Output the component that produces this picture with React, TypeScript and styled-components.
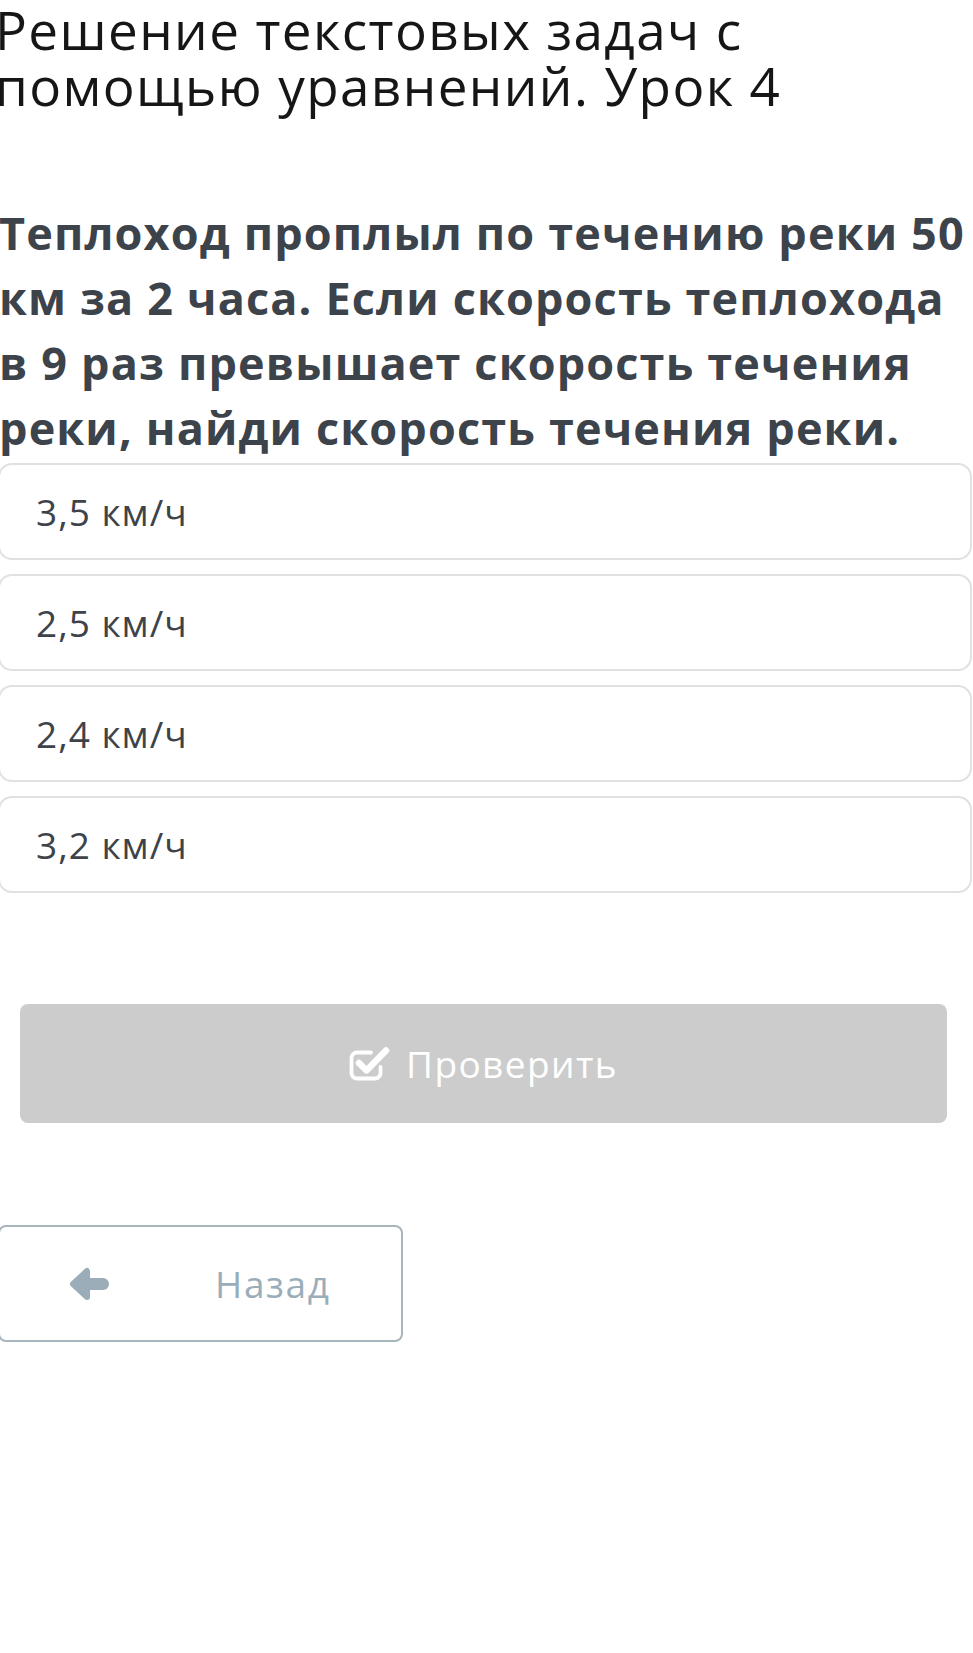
import styled, { createGlobalStyle } from 'styled-components'

const GlobalStyle = createGlobalStyle`
    html, body {
        margin: 0;
        padding: 0;
        background: #ffffff;
    }
    body {
        font-family: "Open Sans", "Noto Sans", "Liberation Sans", sans-serif;
        overflow: hidden;
    }
`

const Page = styled.div`
    width: 973px;
    min-height: 1653px;
    display: flex;
    flex-direction: column;
    padding-top: 2px;
    box-sizing: border-box;
`

const Title = styled.h1`
    margin: 0 0 0 -5px;
    font-size: 53px;
    line-height: 56px;
    font-weight: 400;
    letter-spacing: 1.4px;
    color: #161616;
`

const Question = styled.div`
    margin: 86px 0 0 -1px;
    width: 974px;
    font-size: 45px;
    line-height: 65px;
    font-weight: 700;
    letter-spacing: 1.15px;
    color: #3d434b;
`

const Options = styled.div`
    margin: 3px 0 0 -2px;
    width: 974px;
    display: flex;
    flex-direction: column;
    gap: 14px;
`

const Option = styled.div`
    height: 97px;
    box-sizing: border-box;
    border: 2px solid #e1e1e1;
    border-radius: 14px;
    display: flex;
    align-items: center;
    padding-left: 36px;
    font-size: 37px;
    letter-spacing: 1px;
    color: #3e434a;
    background: #fff;
`

const CheckButton = styled.div`
    margin: 111px 0 0 20px;
    width: 927px;
    height: 119px;
    border-radius: 8px;
    background: #cccccc;
    display: flex;
    align-items: center;
    justify-content: center;
    gap: 15px;
    color: #ffffff;
    font-size: 37px;
    letter-spacing: 1.4px;
`

const BackButton = styled.div<{ $color: string }>`
    margin: 102px 0 0 -2px;
    width: 405px;
    height: 117px;
    box-sizing: border-box;
    border: 2px solid #a9b5bd;
    border-radius: 8px;
    display: flex;
    align-items: center;
    padding-left: 68px;
    color: ${({ $color }) => $color};
    font-size: 37px;
    letter-spacing: 1.6px;
`

const BackLabel = styled.span`
    margin-left: 105px;
`

const CheckIcon = () => (
    <svg width="42" height="34" viewBox="0 0 42 34" fill="none">
        <path d="M22 5.5 H8 a5.5 5.5 0 0 0 -5.5 5.5 V26 a5.5 5.5 0 0 0 5.5 5.5 H26 a5.5 5.5 0 0 0 5.5 -5.5 V20"
            stroke="#fff" strokeWidth="3.8" strokeLinecap="round" />
        <path d="M10 16 L17.5 23.5 L37 3.5" stroke="#fff" strokeWidth="6.5" strokeLinecap="round" strokeLinejoin="round" />
    </svg>
)

const ArrowIcon = ({ color }: { color: string }) => (
    <svg width="42" height="34" viewBox="0 0 42 34">
        <path d="M5 17 L19 4 L19 30 Z" fill={color} stroke={color} strokeWidth="6" strokeLinejoin="round" />
        <path d="M17 17 H35" stroke={color} strokeWidth="12" strokeLinecap="round" />
    </svg>
)

const answers = ['3,5 км/ч', '2,5 км/ч', '2,4 км/ч', '3,2 км/ч']

export default function App() {
    const muted = '#9badb9'
    return <>
        <GlobalStyle />
        <Page>
            <Title>Решение текстовых задач с<br />помощью уравнений. Урок 4</Title>
            <Question>
                Теплоход проплыл по течению реки 50 км за 2 часа. Если скорость теплохода в 9 раз превышает скорость течения реки, найди скорость течения реки.
            </Question>
            <Options>
                {answers.map((a) => <Option key={a}>{a}</Option>)}
            </Options>
            <CheckButton>
                <CheckIcon />
                <span>Проверить</span>
            </CheckButton>
            <BackButton $color={muted}>
                <ArrowIcon color={muted} />
                <BackLabel>Назад</BackLabel>
            </BackButton>
        </Page>
    </>
}
